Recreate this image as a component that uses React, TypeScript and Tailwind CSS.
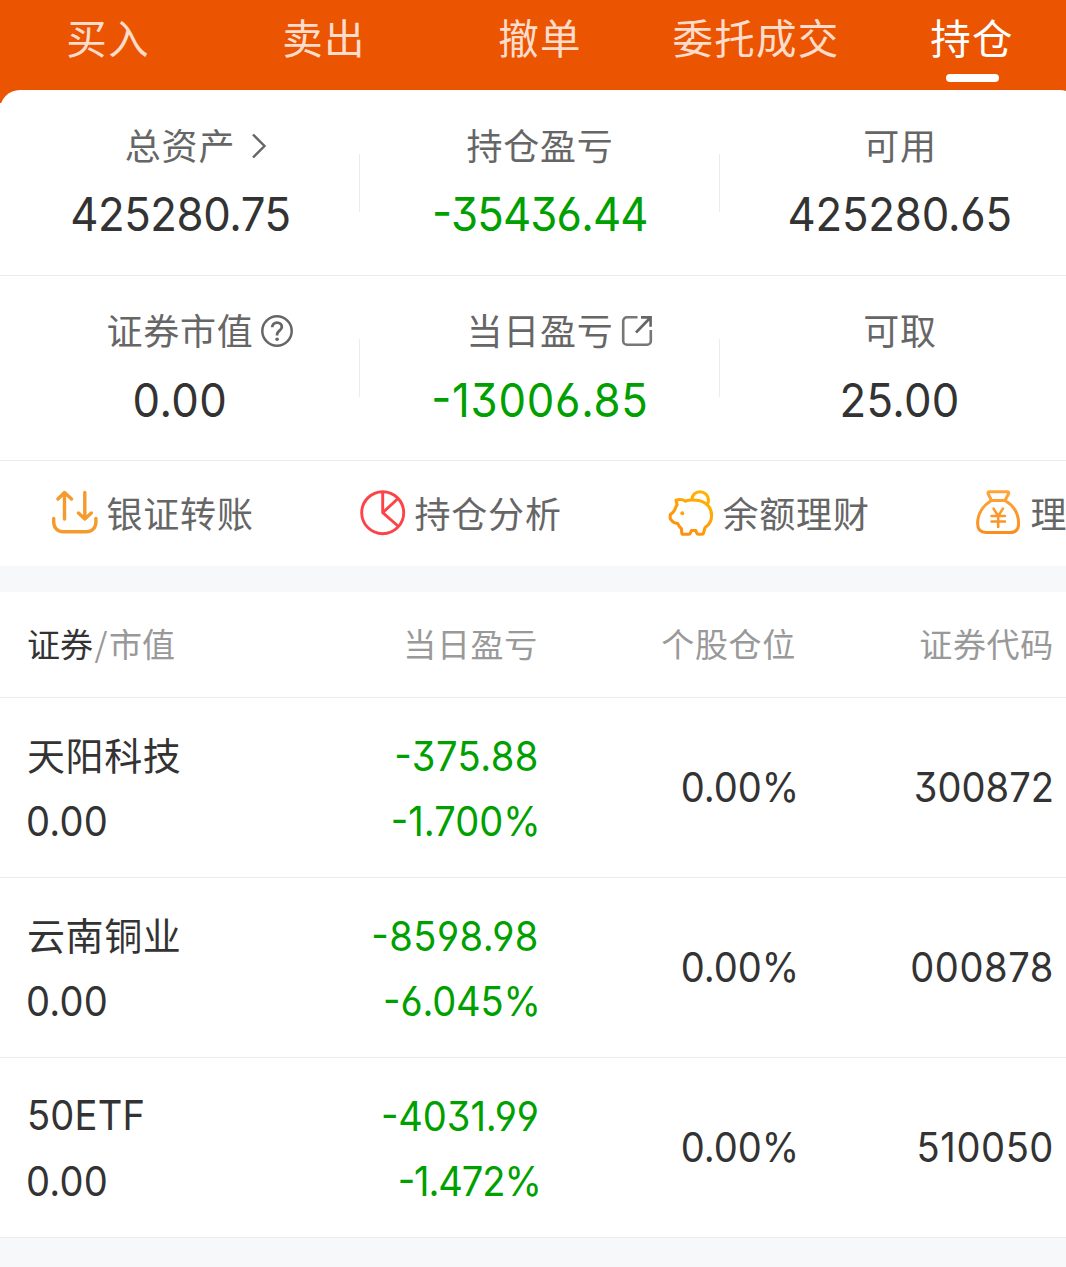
import type { ReactNode } from "react";

const CJK = "font-['Noto_Sans_CJK_SC',sans-serif]";
const NUM = "font-['Inter',sans-serif] [font-feature-settings:'cv03','cv04','cv09','case']";

const tabs = ["买入", "卖出", "撤单", "委托成交", "持仓"];

function Chevron() {
  return (
    <svg className="ml-[15px] h-[26px] w-[18px]" viewBox="0 0 18 26" fill="none" stroke="#666" strokeWidth="2.4">
      <path d="M3 1.5 L14.5 13 L3 24.5" />
    </svg>
  );
}

function Help() {
  return (
    <svg className="ml-[7px] h-8 w-8" viewBox="0 0 32 32" fill="none" stroke="#666" strokeWidth="2.5">
      <circle cx="16" cy="16" r="14.7" />
      <path d="M11.2 12.3c0-2.8 2-4.6 4.8-4.6s4.8 1.7 4.8 4.2c0 3.6-4.7 3.8-4.7 7.6v1" strokeWidth="2.8" />
      <circle cx="16.1" cy="24.2" r="1.8" fill="#666" stroke="none" />
    </svg>
  );
}

function External() {
  return (
    <svg className="ml-[7px] h-8 w-8" viewBox="0 0 32 32" fill="none" stroke="#777" strokeWidth="2.6">
      <path d="M16.5 2.200H6A3.800 3.800 0 0 0 2.200 6v20A3.800 3.800 0 0 0 6 29.800h20a3.800 3.800 0 0 0 3.800-3.800V15" />
      <path d="M20 2.400h9.600v9.300M29 3 15 17.500" stroke="#666" />
    </svg>
  );
}

function Stat({ label, icon, value, green, tracking, divider }: {
  label: string; icon?: ReactNode; value: string; green?: boolean; tracking: string; divider?: boolean;
}) {
  return (
    <div className="flex w-[360px] items-center">
      <div className="flex flex-1 flex-col items-center">
        <div className={`relative flex h-[44px] items-center text-[36px] leading-none tracking-[0.8px] text-[#666] ${CJK}`}>
          <span className="pb-1">{label}</span>
          {icon && <span className="absolute left-full">{icon}</span>}
        </div>
        <div className={`mt-[18px] flex h-[56px] scale-x-[0.93] items-center text-[47px] leading-none ${tracking} ${NUM} ${green ? "text-[#00a000]" : "text-[#333]"}`}>
          {value}
        </div>
      </div>
      {divider && <div className="-ml-px h-[58px] w-px bg-[#ebebeb]" />}
    </div>
  );
}

function TransferIcon() {
  return (
    <svg className="h-[46px] w-[46px]" viewBox="0 0 46 46" fill="none" stroke="#f59a2c" strokeWidth="3.4" strokeLinecap="round" strokeLinejoin="round">
      <path d="M12.500 29V3M6 9l6.500-6.500L19.500 9" />
      <path d="M32.800 2.500v26.500M26.500 23l6.300 6 6.500-6" />
      <path d="M1.700 28.500v3.500c0 5.500 3.500 9.800 9.500 9.800h23.200c6 0 9.500-4.300 9.500-9.800v-3.500" />
    </svg>
  );
}

function PieIcon() {
  return (
    <svg className="h-[46px] w-[46px]" viewBox="0 0 46 46" fill="none" stroke="#fb4348" strokeWidth="2.9" strokeLinejoin="round">
      <circle cx="22.7" cy="22.7" r="21" />
      <path d="M22.700 1.700v21L38 8.500M22.700 22.700 38.500 36.500" />
    </svg>
  );
}

function PiggyIcon() {
  return (
    <svg className="h-[46px] w-[46px]" viewBox="0 0 46 46" fill="none" stroke="url(#pig)" strokeWidth="3.1" strokeLinejoin="round" strokeLinecap="round">
      <defs>
        <linearGradient id="pig" x1="40" y1="0" x2="8" y2="46" gradientUnits="userSpaceOnUse">
          <stop stopColor="#ffb800" />
          <stop offset="1" stopColor="#ff8a12" />
        </linearGradient>
      </defs>
      <path d="M8 10.300C12 8.800 14.500 9 17.500 11.200 20 10 24 9.800 28.500 10.200 38 11 43.600 17.500 43.600 25.500c0 5.300-2.700 9.500-6.700 12.300l-1.400 5.300c-.2.800-.8 1.200-1.600 1.200h-3.400c-1 0-1.500-.4-1.800-1.300l-.9-2.500h-4.400l-1 2.500c-.3.900-.8 1.300-1.700 1.300h-5.300c-1 0-1.500-.5-1.600-1.500l-.4-4.200c-1.300-1-2.700-3-3.700-5-3-.6-4.900-1.500-6.200-3.300l-1.200-1.600c-.3-2-.3-3 .2-4.300 2.400-1.500 4-3.300 5-6.500.6-1.500.9-2.300 1.600-3.200z" />
      <path d="M24 9.500c0-4.500 3.500-7.700 8-7.700s8.500 3.500 8.500 8.200c0 1.700-.5 3.200-1.300 4.500" />
      <circle cx="14.3" cy="23.2" r="2" fill="#ffa408" stroke="none" />
    </svg>
  );
}

function BagIcon() {
  return (
    <svg className="h-[46px] w-[46px]" viewBox="0 0 46 46" fill="none" stroke="url(#bag)" strokeWidth="3" strokeLinejoin="round" strokeLinecap="round">
      <defs>
        <linearGradient id="bag" x1="0" y1="0" x2="0" y2="46" gradientUnits="userSpaceOnUse">
          <stop stopColor="#ffa53c" />
          <stop offset="1" stopColor="#f98d1d" />
        </linearGradient>
      </defs>
      <path d="M15.500 10.500 12 3.500c-.3-1 .2-1.700 1.200-1.700h18.300c1 0 1.500.7 1.200 1.700L29 10.500z" />
      <path d="M15.500 10.500C7 15.500 1.600 24 1.600 33.500c0 6.500 3 9 8.500 9h24c5.500 0 8.500-2.500 8.500-9C42.600 24 37.500 15.500 29 10.500" />
      <path d="M17.500 18.500l4.700 7.500L27 18.500M15.500 26h13.500M15.500 31.500h13.500M22.200 26v11" strokeWidth="2.5" />
    </svg>
  );
}

const actions = [
  { label: "银证转账", icon: <TransferIcon /> },
  { label: "持仓分析", icon: <PieIcon /> },
  { label: "余额理财", icon: <PiggyIcon /> },
  { label: "理", icon: <BagIcon /> },
];

const rows = [
  { name: "天阳科技", pl: "-375.88", plT: "tracking-[0.5px]", pct: "-1.700%", pctT: "tracking-[0px]", code: "300872", codeT: "tracking-[0px]" },
  { name: "云南铜业", pl: "-8598.98", plT: "tracking-[0.5px]", pct: "-6.045%", pctT: "tracking-[-0.2px]", code: "000878", codeT: "tracking-[0.6px]" },
  { name: "50ETF", latin: true, pl: "-4031.99", plT: "tracking-[-0.1px]", pct: "-1.472%", pctT: "tracking-[-1.2px]", code: "510050", codeT: "tracking-[0.6px]" },
];

export default function App() {
  return (
    <div className="h-[1267px] w-[1066px] overflow-hidden bg-[#f6f8fa]">
      <div className="w-[1080px]">
        <header className={`flex h-[103px] bg-[#eb5502] ${CJK}`}>
          {tabs.map((t, i) => (
            <div key={t} className={`flex w-[216px] flex-col items-center text-[40.5px] leading-none tracking-[1.2px] ${i === 4 ? "text-white" : "text-[#fddccb]"}`}>
              <span className="flex h-[74px] items-center pt-px">{t}</span>
              {i === 4 && <span className="h-2 w-[53px] rounded-full bg-white" />}
            </div>
          ))}
        </header>

        <section className="relative -mt-[13px] rounded-t-[20px] bg-white">
          <div className="flex h-[186px] border-b border-[#ebebeb]">
            <Stat label="总资产" icon={<Chevron />} value="425280.75" tracking="tracking-[-0.5px]" divider />
            <Stat label="持仓盈亏" value="-35436.44" green tracking="tracking-[-0.9px]" divider />
            <Stat label="可用" value="425280.65" tracking="tracking-[-0.2px]" />
          </div>
          <div className="flex h-[185px] border-b border-[#ebebeb]">
            <Stat label="证券市值" icon={<Help />} value="0.00" tracking="tracking-[0.4px]" divider />
            <Stat label="当日盈亏" icon={<External />} value="-13006.85" green tracking="tracking-[0.8px]" divider />
            <Stat label="可取" value="25.00" tracking="tracking-[0.3px]" />
          </div>
          <div className="flex h-[105px] w-max items-center pl-[52.5px]">
            {actions.map((a) => (
              <div key={a.label} className={`flex w-[308px] items-center gap-[9px] pb-px text-[36px] leading-none tracking-[0.8px] text-[#666] ${CJK}`}>
                <span className="-ml-px">{a.icon}</span>
                <span className="pb-[3px]">{a.label}</span>
              </div>
            ))}
          </div>
        </section>

        <section className="mt-[26px] bg-white">
          <div className={`flex h-[106px] items-center border-b border-[#ebebeb] pb-[3px] pl-[27px] text-[33px] leading-none tracking-[0.7px] text-[#999] ${CJK}`}>
            <div className="w-[252px] tracking-[0px]"><span className="text-[#333]">证券</span><span className="px-[1.5px]">/</span>市值</div>
            <div className="w-[259px] text-right">当日盈亏</div>
            <div className="w-[258px] text-right">个股仓位</div>
            <div className="w-[258px] text-right">证券代码</div>
          </div>
          {rows.map((r) => (
            <div key={r.name} className={`flex h-[180px] items-center border-b border-[#ebebeb] pl-[27px] text-[41px] leading-none text-[#333] ${NUM}`}>
              <div className="flex w-[252px] flex-col gap-[17px]">
                {r.latin ? (
                  <span className="flex h-12 origin-left scale-x-[0.93] items-center pt-px tracking-[0.2px]">{r.name}</span>
                ) : (
                  <span className={`flex h-12 items-center pb-[2px] text-[38px] tracking-[0.6px] ${CJK}`}>{r.name}</span>
                )}
                <span className="-ml-px flex h-12 origin-left scale-x-[0.93] items-center pt-[2px] tracking-[0.2px]">0.00</span>
              </div>
              <div className="flex w-[259px] origin-right scale-x-[0.93] flex-col items-end gap-[17px] text-[#00a000]">
                <span className={`-mr-px flex h-12 items-center pt-[2px] ${r.plT}`}>{r.pl}</span>
                <span className={`-mr-[3px] flex h-12 items-center pt-[2px] ${r.pctT}`}>{r.pct}</span>
              </div>
              <div className="-mr-[3px] ml-[3px] w-[258px] origin-right scale-x-[0.93] text-right tracking-[-0.1px]">0.00%</div>
              <div className={`w-[258px] origin-right scale-x-[0.93] text-right ${r.codeT}`}>{r.code}</div>
            </div>
          ))}
        </section>
      </div>
    </div>
  );
}
